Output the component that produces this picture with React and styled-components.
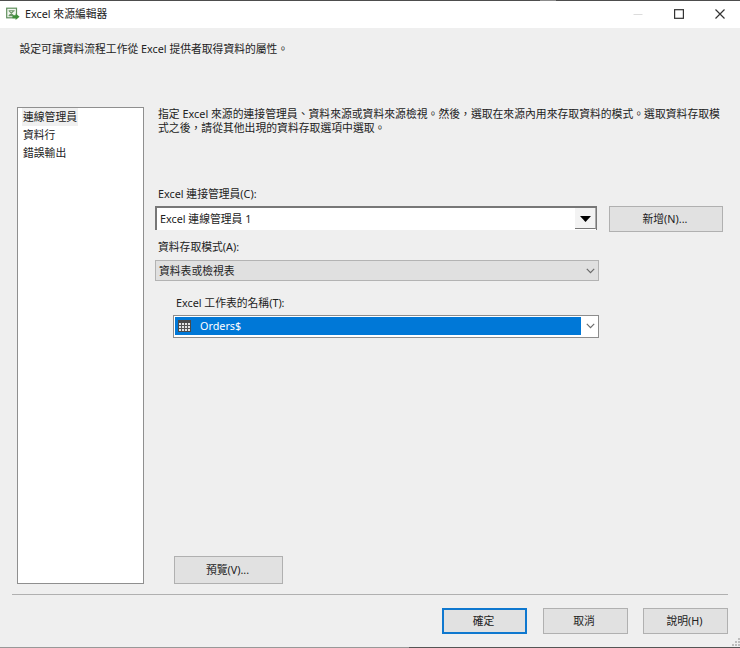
import React from 'react'
import styled, { createGlobalStyle } from 'styled-components'

const GlobalStyle = createGlobalStyle`
  * {
    box-sizing: border-box;
  }

  body {
    margin: 0;
    overflow: hidden;
    background: #efefef;
  }
`

const menu = ['連線管理員', '資料行', '錯誤輸出']

const Chevron = () => (
  <svg width="9" height="6" viewBox="0 0 9 6" fill="none">
    <path d="M0.8 0.9L4.5 4.6L8.2 0.9" stroke="#6a6a6a" strokeWidth="1.2" />
  </svg>
)

const App = () => {
  return (
    <>
      <GlobalStyle />
      <Window>
        <TopEdge />
        <TitleBar>
          <svg width="14" height="14" viewBox="0 0 14 14" fill="none">
            <rect x="0.7" y="1.2" width="9.8" height="9.6" fill="#f2f7f0" stroke="#5f8f5c" strokeWidth="1.2" />
            <path d="M2.6 3.7H8.7M2.6 8.6H6.5M3.2 4L7.4 8.6M7.6 3.8L3.4 8.4" stroke="#6b9567" strokeWidth="1.1" />
            <path d="M6.4 8.2H9.6V6.4L13.6 9.7L9.6 13V11.2H6.4Z" fill="#3f8f3a" />
          </svg>
          <Title>Excel 來源編輯器</Title>
          <WindowButtons>
            <svg width="10" height="12" viewBox="0 0 10 12"><path d="M0.5 6.5H9.5" stroke="#dcdcdc" /></svg>
            <svg width="10" height="12" viewBox="0 0 10 12"><rect x="0.6" y="1.7" width="8.8" height="8.6" fill="none" stroke="#333" strokeWidth="1.2" /></svg>
            <svg width="10" height="12" viewBox="0 0 10 12"><path d="M0.5 1.5L9.5 10.5M9.5 1.5L0.5 10.5" stroke="#333" strokeWidth="1.2" /></svg>
          </WindowButtons>
        </TitleBar>

        <Intro>設定可讓資料流程工作從 Excel 提供者取得資料的屬性。</Intro>

        <Content>
          <Sidebar>
            {menu.map((name, i) => (
              <MenuItem key={name} $active={i === 0}>{name}</MenuItem>
            ))}
          </Sidebar>

          <Panel>
            <Description>
              指定 Excel 來源的連接管理員、資料來源或資料來源檢視。然後，選取在來源內用來存取資料的模式。選取資料存取模
              <br />
              式之後，請從其他出現的資料存取選項中選取。
            </Description>

            <Label>Excel 連接管理員(C):</Label>
            <ConnectionRow>
              <ClassicSelect>
                <span>Excel 連線管理員 1</span>
                <ArrowButton>
                  <svg width="11" height="6" viewBox="0 0 11 6"><path d="M0 0H11L5.5 6Z" fill="#000" /></svg>
                </ArrowButton>
              </ClassicSelect>
              <Button $width={114} $height={26}>新增(N)...</Button>
            </ConnectionRow>

            <Label>資料存取模式(A):</Label>
            <ModeSelect>
              <span>資料表或檢視表</span>
              <Chevron />
            </ModeSelect>

            <SheetGroup>
              <Label>Excel 工作表的名稱(T):</Label>
              <SheetSelect>
                <SheetValue>
                  <svg width="13" height="12" viewBox="0 0 13 12">
                    <rect width="13" height="12" fill="#4a4a4a" />
                    <path d="M1 3H12V11H1Z" fill="#e4e4e4" />
                    <path d="M1 5.5H12M1 8.5H12M3.5 3V11M6.5 3V11M9.5 3V11" stroke="#555" strokeWidth="1" />
                  </svg>
                  <span>Orders$</span>
                </SheetValue>
                <Chevron />
              </SheetSelect>
            </SheetGroup>

            <PreviewRow>
              <Button $width={109} $height={28}>預覽(V)...</Button>
            </PreviewRow>
          </Panel>
        </Content>

        <Footer>
          <Button $width={85} $height={26} $primary>確定</Button>
          <Button $width={85} $height={26}>取消</Button>
          <Button $width={85} $height={26}>說明(H)</Button>
        </Footer>

        <Grip width="8" height="8" viewBox="0 0 8 8">
          <path d="M6 0h2v2h-2zM3 3h2v2h-2zM6 3h2v2h-2zM0 6h2v2h-2zM3 6h2v2h-2zM6 6h2v2h-2z" fill="#bdbdbd" />
        </Grip>
        <BottomEdge />
      </Window>
    </>
  )
}

const Window = styled.div`
  position: relative;
  display: flex;
  flex-direction: column;
  width: 740px;
  height: 648px;
  background: #efefef;
  color: #222;
  font-family: 'Noto Sans', 'Noto Sans CJK TC', sans-serif;
  font-size: 10.8px;
  line-height: 14px;
  white-space: nowrap;
`

const TopEdge = styled.div`
  flex: none;
  height: 1px;
  background: linear-gradient(to right, #4d4d4d 540px, #8c8c8c 540px, #8c8c8c 556px, #4d4d4d 556px);
`

const BottomEdge = styled.div`
  flex: none;
  height: 1px;
  margin-top: auto;
  background: linear-gradient(to right, #989898 409px, #555 409px);
`

const TitleBar = styled.header`
  flex: none;
  display: flex;
  align-items: center;
  height: 27px;
  padding: 0 15px 2px 6px;
  background: #fff;
`

const Title = styled.span`
  margin-left: 5px;
`

const WindowButtons = styled.div`
  display: flex;
  gap: 31px;
  margin-left: auto;
`

const Intro = styled.p`
  flex: none;
  height: 65px;
  margin: 0;
  padding: 14px 0 0 19.5px;
`

const Content = styled.div`
  flex: none;
  display: flex;
  height: 501px;
  padding: 14px 0 10px 17px;
`

const Sidebar = styled.nav`
  display: flex;
  flex-direction: column;
  align-items: flex-start;
  width: 127px;
  padding: 0 0 0 4px;
  background: #fff;
  border: 1px solid #8f8f8f;
`

const MenuItem = styled.div`
  height: 18px;
  padding: 0 1px;
  line-height: 18px;
  background: ${({ $active }) => ($active ? '#f0f0f0' : 'transparent')};
`

const Panel = styled.main`
  display: flex;
  flex-direction: column;
  align-items: flex-start;
  margin-left: 11px;
`

const Description = styled.p`
  height: 80px;
  margin: 0 0 0 3px;
  letter-spacing: 0.03px;
`

const Label = styled.label`
  height: 19px;
  margin-left: 3px;
`

const ConnectionRow = styled.div`
  display: flex;
  align-items: flex-start;
  gap: 12px;
  height: 34px;
`

const ClassicSelect = styled.div`
  display: flex;
  align-items: center;
  justify-content: space-between;
  width: 442px;
  height: 24px;
  padding: 0 0 1px 3px;
  background: #fff;
  border: 2px solid #777;
  border-right-width: 1px;
  border-bottom: 0;
`

const ArrowButton = styled.div`
  display: flex;
  align-items: center;
  justify-content: center;
  width: 21px;
  height: 21px;
  padding-top: 2px;
  background: #f3f3f3;
  border-right: 1px solid #aaa;
  border-bottom: 1px solid #777;
`

const ModeSelect = styled.div`
  display: flex;
  align-items: center;
  justify-content: space-between;
  width: 444px;
  height: 21px;
  margin-top: 1px;
  padding: 0 3px;
  background: #e0e0e0;
  border: 1px solid #b3b3b3;
`

const SheetGroup = styled.div`
  display: flex;
  flex-direction: column;
  margin: 15px 0 0 18px;
`

const SheetSelect = styled.div`
  display: flex;
  align-items: center;
  justify-content: space-between;
  width: 426px;
  height: 23px;
  padding: 1px 3px 2px 1px;
  background: #fff;
  border: 1px solid #8c8c8c;
`

const SheetValue = styled.div`
  display: flex;
  align-items: center;
  gap: 9px;
  width: 406px;
  height: 18px;
  padding: 0 0 1px 3px;
  background: #0078d7;
  color: #fff;
`

const PreviewRow = styled.div`
  margin: auto 0 0 19px;
`

const Button = styled.button`
  width: ${({ $width }) => $width}px;
  height: ${({ $height }) => $height}px;
  padding: 0 2px 0 0;
  background: #e1e1e1;
  border: ${({ $primary }) => ($primary ? '2px solid #0f78cf' : '1px solid #b0b0b0')};
  color: inherit;
  font: inherit;
`

const Footer = styled.footer`
  flex: none;
  display: flex;
  justify-content: flex-end;
  gap: 15.5px;
  margin: 0 12px;
  padding-top: 13px;
  border-top: 1px solid #b0b0b0;
`

const Grip = styled.svg`
  position: absolute;
  right: 0;
  bottom: 2px;
`

export default App
